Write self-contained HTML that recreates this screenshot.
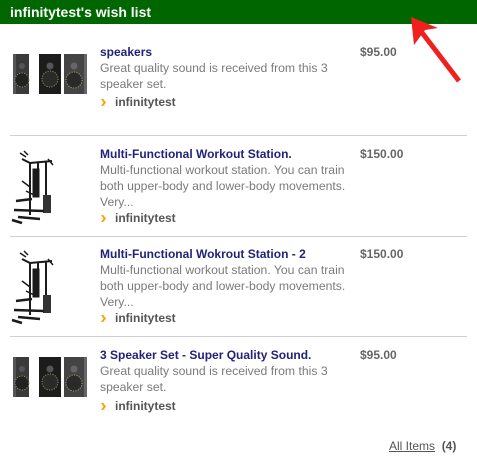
<!DOCTYPE html>
<html><head><meta charset="utf-8"><style>
*{margin:0;padding:0;box-sizing:border-box}
body{width:477px;height:465px;background:#fff;font-family:"Liberation Sans",Arial,sans-serif;font-size:12px;position:relative;overflow:hidden}
.hdr{position:absolute;left:0;top:0;width:477px;height:24px;background:#006600;color:#fff;font-weight:bold;font-size:14px;padding:4px 0 0 10px;line-height:16px}
.a{position:absolute;line-height:16px}
.t{color:#22227a;font-weight:bold}
.d{color:#7a7a7a;width:258px;font-size:12.2px}
.s{color:#555;font-weight:bold;padding-left:15px}
.s i{position:absolute;left:1px;top:5px;width:5px;height:7px;background:#f5a800;clip-path:polygon(0 0,45% 0,100% 50%,45% 100%,0 100%,50% 50%)}
.p{color:#666;font-weight:bold}
.sep{position:absolute;left:10px;width:457px;height:1px;background:#cfcfcf}
</style></head><body>
<div class="hdr">infinitytest's wish list</div>
<svg style="position:absolute;left:0;top:0" width="477" height="465">
<defs>
<g id="spk">
<rect x="13" y="0" width="16" height="40" fill="#3a3a3a"/><rect x="13" y="0" width="3" height="40" fill="#555"/>
<circle cx="22" cy="26" r="7" fill="#222" stroke="#a89a60" stroke-width="1" stroke-dasharray="1 1.5"/>
<circle cx="22" cy="12" r="3" fill="#555"/>
<rect x="39" y="0" width="22" height="40" fill="#1c1c1c"/>
<circle cx="50" cy="25" r="8" fill="#2a2a2a" stroke="#a89a60" stroke-width="1" stroke-dasharray="1 1.5"/>
<circle cx="50" cy="12" r="3.5" fill="#555"/>
<rect x="64" y="0" width="23" height="40" fill="#444"/><rect x="84" y="0" width="3" height="40" fill="#666"/>
<circle cx="74" cy="26" r="8" fill="#2a2a2a" stroke="#b8a870" stroke-width="1" stroke-dasharray="1 1.5"/>
<circle cx="74" cy="12" r="3.5" fill="#666"/>
</g>
<g id="gym" fill="none" stroke="#1a1a1a">
<path d="M22 14 L30 18 L30 70 M30 18 L52 16 M38 17 L38 45 M46 16 L46 58" stroke-width="2"/>
<path d="M20 8 L26 12 M24 6 L28 10 M48 14 L53 20" stroke-width="1.5"/>
<rect x="33" y="24" width="6" height="28" fill="#1a1a1a"/>
<rect x="43" y="50" width="8" height="18" fill="#333" stroke="none"/>
<path d="M16 56 L32 54 M14 65 L44 66 M18 72 L40 74 M12 75 L22 78" stroke-width="2.5"/>
<path d="M22 36 L30 42 M26 46 L34 50" stroke-width="1.5"/>
</g>
</defs>
<use href="#spk" transform="translate(0,54)"/>
<use href="#gym" transform="translate(0,145)"/>
<use href="#gym" transform="translate(0,245)"/>
<use href="#spk" transform="translate(0,357)"/>
<line x1="459" y1="81" x2="420" y2="30" stroke="#f0201e" stroke-width="5"/>
<polygon points="411,17 438,28 425,30 414,45" fill="#f0201e"/>
</svg>

<div class="a t" style="left:100px;top:44px">speakers</div>
<div class="a d" style="left:100px;top:60px">Great quality sound is received from this 3 speaker set.</div>
<div class="a s" style="left:100px;top:94px"><i></i>infinitytest</div>
<div class="a p" style="left:360px;top:44px">$95.00</div>
<div class="sep" style="top:135px"></div>

<div class="a t" style="left:100px;top:146px">Multi-Functional Workout Station.</div>
<div class="a d" style="left:100px;top:162px">Multi-functional workout station. You can train both upper-body and lower-body movements. Very...</div>
<div class="a s" style="left:100px;top:210px"><i></i>infinitytest</div>
<div class="a p" style="left:360px;top:146px">$150.00</div>
<div class="sep" style="top:236px"></div>

<div class="a t" style="left:100px;top:246px">Multi-Functional Wokrout Station - 2</div>
<div class="a d" style="left:100px;top:262px">Multi-functional workout station. You can train both upper-body and lower-body movements. Very...</div>
<div class="a s" style="left:100px;top:310px"><i></i>infinitytest</div>
<div class="a p" style="left:360px;top:246px">$150.00</div>
<div class="sep" style="top:336px"></div>

<div class="a t" style="left:100px;top:347px">3 Speaker Set - Super Quality Sound.</div>
<div class="a d" style="left:100px;top:363px">Great quality sound is received from this 3 speaker set.</div>
<div class="a s" style="left:100px;top:398px"><i></i>infinitytest</div>
<div class="a p" style="left:360px;top:347px">$95.00</div>

<div class="a" style="left:389px;top:438px;color:#555"><span style="text-decoration:underline">All Items</span>&nbsp; <b>(4)</b></div>
</body></html>
